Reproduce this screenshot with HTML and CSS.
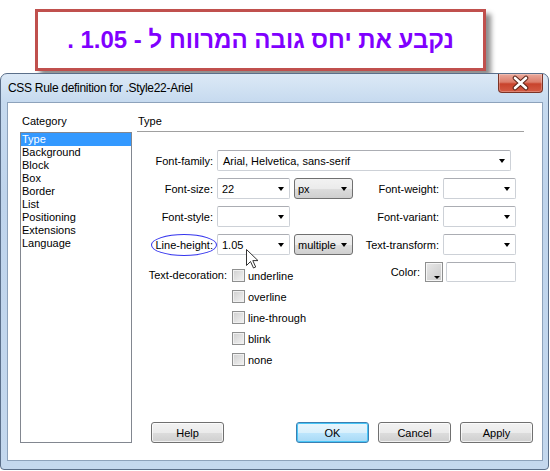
FILE: index.html
```html
<!DOCTYPE html>
<html lang="he">
  <head>
    <meta charset="UTF-8" />
    <title>CSS Rule definition</title>
    <link rel="stylesheet" href="styles.css">
  </head>
  <body>
    <div class="banner" dir="rtl">נקבע את יחס גובה המרווח ל - 1.05 .</div>

    <div class="window">
      <div class="titlebar">
        <span class="title">CSS Rule definition for .Style22-Ariel</span>
        <div class="close">
          <svg width="43" height="17" viewBox="0 0 43 17">
            <path d="M16 3 L27 13 M27 3 L16 13" stroke="#5a2418" stroke-width="4.6" stroke-linecap="round"/>
            <path d="M16 3 L27 13 M27 3 L16 13" stroke="#fff" stroke-width="2.6" stroke-linecap="round"/>
          </svg>
        </div>
      </div>

      <div class="frame">
        <div class="client">
          <div class="sidebar">
            <p class="heading category">Category</p>
            <div class="listbox">
              <div class="item selected">Type</div>
              <div class="item">Background</div>
              <div class="item">Block</div>
              <div class="item">Box</div>
              <div class="item">Border</div>
              <div class="item">List</div>
              <div class="item">Positioning</div>
              <div class="item">Extensions</div>
              <div class="item">Language</div>
            </div>
          </div>

          <div class="panel">
            <p class="heading panel-heading">Type</p>

            <div class="form">
              <span class="lbl">Font-family:</span>
              <div class="combo wide"><span>Arial, Helvetica, sans-serif</span><i class="arrow"></i></div>

              <span class="lbl">Font-size:</span>
              <div class="combo"><span>22</span><i class="arrow"></i></div>
              <div class="dropbtn"><span>px</span><i class="arrow"></i></div>
              <span class="lbl">Font-weight:</span>
              <div class="combo"><span></span><i class="arrow"></i></div>

              <span class="lbl">Font-style:</span>
              <div class="combo"><span></span><i class="arrow"></i></div>
              <span></span>
              <span class="lbl">Font-variant:</span>
              <div class="combo"><span></span><i class="arrow"></i></div>

              <span class="lbl"><span class="ring">Line-height:</span></span>
              <div class="combo"><span>1.05</span><i class="arrow"></i></div>
              <div class="dropbtn"><span>multiple</span><i class="arrow"></i></div>
              <span class="lbl">Text-transform:</span>
              <div class="combo"><span></span><i class="arrow"></i></div>

              <div class="deco">
                <span class="deco-label">Text-decoration:</span>
                <div class="checks">
                  <div class="check-row"><span class="box"></span>underline</div>
                  <div class="check-row"><span class="box"></span>overline</div>
                  <div class="check-row"><span class="box"></span>line-through</div>
                  <div class="check-row"><span class="box"></span>blink</div>
                  <div class="check-row"><span class="box"></span>none</div>
                </div>
              </div>
              <div class="color-cell">
                <span class="color-label">Color:</span>
                <span class="swatch"><i class="mini-arrow"></i></span>
              </div>
              <div class="color-input"></div>
            </div>

            <div class="buttons">
              <div class="btn help">Help</div>
              <div class="btn default">OK</div>
              <div class="btn">Cancel</div>
              <div class="btn">Apply</div>
            </div>
          </div>
        </div>
      </div>
    </div>

    <svg class="cursor" width="13" height="21" viewBox="0 0 13 21">
      <path d="M0.5 0.5 L0.5 16.5 L4.5 12.5 L7.5 19 L9.7 18 L6.8 11.6 L12 11.6 Z" fill="#fff" stroke="#333" stroke-width="1" stroke-linejoin="round"/>
    </svg>
  </body>
</html>
```

FILE: styles.css
```css
* {
  margin: 0;
  padding: 0;
  box-sizing: border-box;
}

body {
  width: 550px;
  height: 471px;
  overflow: hidden;
  background-color: #fff;
  color: #000;
  font-family: "Liberation Sans", Arial, sans-serif;
  font-size: 11px;
}

/* caption above the dialog */
.banner {
  margin: 9px 0 0 35px;
  width: 451px;
  height: 62px;
  border: 3px solid #c0504d;
  box-shadow: 5px 5px 5px rgba(0, 0, 0, 0.45);
  display: flex;
  align-items: center;
  justify-content: center;
  font: bold 24px "Liberation Sans", "DejaVu Sans", sans-serif;
  color: #8000ff;
}

/* window frame */
.window {
  margin-top: 2px;
  width: 549px;
  height: 397px;
  border: 1px solid #5b6f8a;
  border-radius: 7px 7px 4px 4px;
  background: linear-gradient(to bottom, #dce9f6 0px, #c6daef 28px, #bfd4ec 120px, #c4d8ee 100%);
}

.titlebar {
  height: 28px;
  display: flex;
  align-items: flex-start;
}

.title {
  padding-left: 7px;
  line-height: 28px;
  font-size: 12px;
  letter-spacing: -0.3px;
}

.close {
  margin-left: auto;
  margin-right: 5px;
  width: 45px;
  height: 19px;
  border: 1px solid #7b3326;
  border-top: none;
  border-radius: 0 0 4px 4px;
  background: linear-gradient(to bottom, #eaa99c 0%, #dc7d6a 45%, #c8432c 55%, #d45b44 100%);
  box-shadow: inset 0 0 0 1px rgba(255, 255, 255, 0.25);
  display: flex;
  justify-content: center;
  align-items: center;
}

.frame {
  padding: 0 5px 8px 6px;
}

.client {
  height: 359px;
  background-color: #fff;
  border: 1px solid #8da2bb;
  display: flex;
  gap: 5px;
  padding: 10px 0 17px 12px;
}

.heading {
  height: 19px;
  line-height: 17px;
}

/* category list */
.sidebar {
  width: 112px;
  display: flex;
  flex-direction: column;
}

.category {
  padding-left: 2px;
}

.listbox {
  flex: 1;
  border: 1px solid #828790;
}

.item {
  height: 13px;
  line-height: 13px;
  padding-left: 1px;
}

.item.selected {
  background-color: #3399ff;
  color: #fff;
}

/* right panel */
.panel {
  flex: 1;
  display: flex;
  flex-direction: column;
  padding-right: 9px;
}

.panel-heading {
  padding-left: 1px;
  margin-right: 9px;
  border-bottom: 1px solid #a0a0a0;
}

.form {
  margin-top: 18px;
  display: grid;
  grid-template-columns: 76px 73px 59px 82px 73px;
  grid-template-rows: 21px 21px 21px 21px auto;
  column-gap: 4px;
  row-gap: 7px;
  align-items: center;
}

.lbl {
  text-align: right;
  white-space: nowrap;
}

.ring {
  display: inline-block;
  border: 1.5px solid #3636ee;
  border-radius: 50%;
  padding: 2px 3px 2px 4px;
  margin-right: -4px;
  line-height: 16px;
}

.combo {
  height: 21px;
  border: 1px solid #cdd1d7;
  border-top-color: #abadb3;
  border-radius: 2px;
  background-color: #fff;
  display: flex;
  align-items: center;
  justify-content: space-between;
  padding: 0 5px 0 4px;
  white-space: nowrap;
}

.combo.wide {
  grid-column: 2 / 6;
  margin-right: 5px;
  padding-left: 5px;
}

.dropbtn {
  height: 21px;
  border: 1px solid #707070;
  border-radius: 3px;
  background: linear-gradient(to bottom, #f2f2f2 0%, #ebebeb 50%, #dddddd 50%, #cfcfcf 100%);
  display: flex;
  align-items: center;
  justify-content: space-between;
  padding: 0 5px 0 3px;
}

.arrow {
  width: 0;
  height: 0;
  border-left: 3.5px solid transparent;
  border-right: 3.5px solid transparent;
  border-top: 4px solid #000;
}

/* text decoration checkboxes */
.deco {
  grid-column: 1 / 4;
  align-self: start;
  display: flex;
  margin-top: 3px;
}

.deco-label {
  width: 90px;
  text-align: right;
  line-height: 21px;
}

.checks {
  margin-left: 5px;
}

.check-row {
  height: 21px;
  display: flex;
  align-items: center;
  gap: 3px;
}

.box {
  width: 13px;
  height: 13px;
  border: 1px solid #8e8f8f;
  background: linear-gradient(135deg, #cfcfcf, #f3f3f3);
  box-shadow: inset 0 0 0 1px #f0f0f0;
}

/* colour picker */
.color-cell {
  align-self: start;
  display: flex;
  justify-content: flex-end;
  gap: 5px;
}

.color-label {
  line-height: 20px;
}

.swatch {
  width: 18px;
  height: 20px;
  margin-right: -4px;
  border: 1px solid #8e8f8f;
  background: linear-gradient(135deg, #e8e8e8, #c8c8c8);
  box-shadow: inset 0 0 0 1px #f6f6f6;
  display: flex;
  align-items: flex-end;
  justify-content: flex-end;
  padding: 0 2px 2px 0;
}

.mini-arrow {
  width: 0;
  height: 0;
  border-left: 3px solid transparent;
  border-right: 3px solid transparent;
  border-top: 3px solid #000;
}

.color-input {
  align-self: start;
  height: 20px;
  margin-left: 3px;
  border: 1px solid #cdd1d7;
  border-top-color: #abadb3;
  border-radius: 2px;
}

/* dialog buttons */
.buttons {
  margin-top: auto;
  display: flex;
  gap: 9px;
  padding-left: 14px;
}

.btn {
  width: 73px;
  height: 21px;
  border: 1px solid #707070;
  border-radius: 3px;
  background: linear-gradient(to bottom, #f2f2f2 0%, #ebebeb 50%, #dddddd 50%, #cfcfcf 100%);
  box-shadow: inset 0 0 0 1px rgba(255, 255, 255, 0.7);
  display: flex;
  align-items: center;
  justify-content: center;
}

.btn.help {
  margin-right: auto;
}

.btn.default {
  border-color: #3c7fb1;
  background: linear-gradient(to bottom, #eaf6fd 0%, #d9f0fc 50%, #bee6fd 50%, #a7d9f5 100%);
  box-shadow: inset 0 0 0 1px #48c6f7;
}

/* mouse pointer over the dialog */
.cursor {
  position: absolute;
  left: 246px;
  top: 249px;
}
```
